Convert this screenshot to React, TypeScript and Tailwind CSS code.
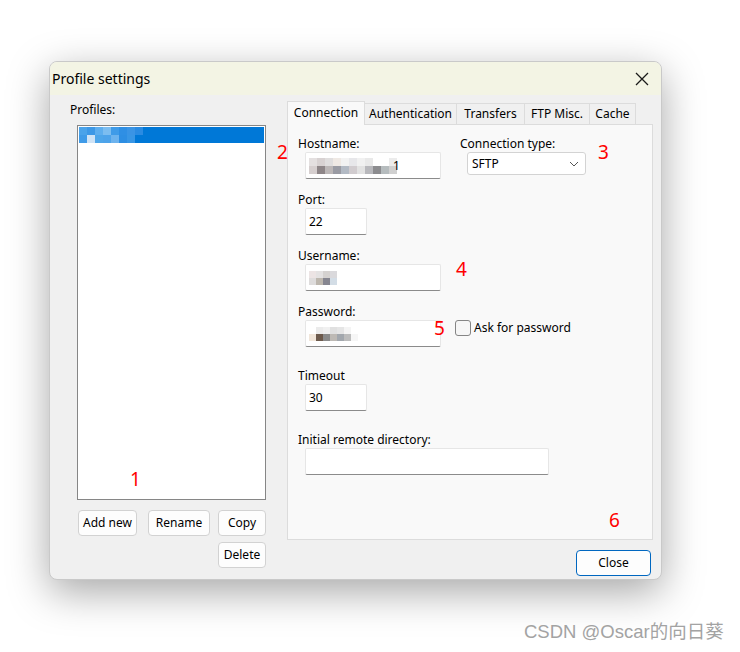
import React from "react";

const font = { fontFamily: '"Noto Sans", "Open Sans", sans-serif' };

function Mosaic({ cells, size = 8 }: { cells: (string | null)[][]; size?: number }) {
  return (
    <div className="flex flex-col">
      {cells.map((row, i) => (
        <div key={i} className="flex">
          {row.map((c, j) => (
            <div key={j} style={{ width: size, height: size, background: c ?? "transparent" }} />
          ))}
        </div>
      ))}
    </div>
  );
}

function TextInput({ w, children }: { w: string; children?: React.ReactNode }) {
  return (
    <div
      className={`${w} h-[27px] bg-white border border-[#e6e6e6] border-b-[#8b8b8b] rounded-[2px] flex items-center px-[3px] text-[12px] text-black`}
    >
      {children}
    </div>
  );
}

function Label({ children }: { children: React.ReactNode }) {
  return <div className="h-[16px] leading-[16px] text-[12px] text-black">{children}</div>;
}

function Btn({ w, children }: { w: string; children: React.ReactNode }) {
  return (
    <div
      className={`${w} h-[26px] bg-[#fdfdfd] border border-[#d2d2d2] rounded-[4px] flex items-center justify-center text-[12px] text-black`}
    >
      {children}
    </div>
  );
}

function Tab({ w, active, children }: { w: string; active?: boolean; children: React.ReactNode }) {
  return active ? (
    <div
      className={`${w} h-[24px] bg-[#f9f9f9] border border-[#dcdcdc] border-b-0 flex items-center justify-center text-[12px] text-black relative z-10 -mb-px pb-[2px]`}
    >
      {children}
    </div>
  ) : (
    <div
      className={`${w} h-[21px] bg-[#f0f0f0] border border-[#dcdcdc] border-b-0 border-l-0 flex items-center justify-center text-[12px] text-black`}
    >
      {children}
    </div>
  );
}

export default function App() {
  const red = "absolute text-[#ff0000] text-[19px] leading-none";
  return (
    <div className="w-[740px] h-[652px] bg-white relative overflow-hidden pt-[61px] pl-[49px]" style={font}>
      <div className="w-[613px] h-[519px] bg-[#f0f0f0] rounded-[8px] border border-[#c9c9c9] shadow-[0_12px_40px_rgba(0,0,0,0.35)] flex flex-col overflow-hidden">
        {/* title bar */}
        <div className="h-[33px] bg-[#f3f4e4] flex items-center justify-between pl-[2px] pr-[12px]">
          <span className="text-[14px] text-black">Profile settings</span>
          <svg width="14" height="14" viewBox="0 0 14 14">
            <path d="M1 1 L13 13 M13 1 L1 13" stroke="#1a1a1a" strokeWidth="1.3" />
          </svg>
        </div>
        {/* body */}
        <div className="flex flex-1">
          {/* left column */}
          <div className="w-[218px] pl-[20px] pt-[7px] flex flex-col">
            <div className="h-[16px] leading-[16px] text-[12px] text-black">Profiles:</div>
            <div className="ml-[7px] mt-[7px] w-[189px] h-[375px] bg-white border border-[#868686] p-px">
              <div className="h-[16px] bg-[#0078d7] flex items-start">
                <Mosaic
                  size={8}
                  cells={[
                    ["#4aa3ea", "#3d98e6", "#5eaeee", "#7cbdf0", "#3f9be8", "#2f8fe4", "#3a94e5", "#2a8be2"],
                    ["#3f9be8", "#cfe3f6", "#4ea6ea", "#4da3ea", "#6db3ee", "#2d8ee3", "#3896e5", "#0078d7"],
                  ]}
                />
              </div>
            </div>
            <div className="flex ml-[8px] mt-[10px]">
              <Btn w="w-[59px]">Add new</Btn>
              <div className="ml-[11px]">
                <Btn w="w-[62px]">Rename</Btn>
              </div>
              <div className="ml-[8px]">
                <Btn w="w-[48px]">Copy</Btn>
              </div>
            </div>
            <div className="flex justify-end mr-[2px] mt-[6px]">
              <Btn w="w-[48px]">Delete</Btn>
            </div>
          </div>
          {/* right column */}
          <div className="flex flex-col ml-[19px] pt-[6px]">
            <div className="flex items-end h-[23px]">
              <Tab w="w-[78px]" active>
                Connection
              </Tab>
              <Tab w="w-[92px]">Authentication</Tab>
              <Tab w="w-[68px]">Transfers</Tab>
              <Tab w="w-[65px]">FTP Misc.</Tab>
              <Tab w="w-[46px]">Cache</Tab>
            </div>
            <div className="w-[366px] h-[416px] bg-[#f9f9f9] border border-[#dcdcdc] pl-[10px] pt-[11px]">
              <div className="flex">
                <div className="w-[161px]">
                  <Label>Hostname:</Label>
                  <div className="ml-[7px]">
                    <TextInput w="w-[136px]">
                      <div className="flex items-center">
                        <Mosaic
                          size={8}
                          cells={[
                            ["#e4e0e0", "#d8d2d2", "#e0dede", "#efe9e4", "#f2f2f2", "#e7e7ea", "#f1f1f1", "#e9e9e9", "#ffffff", "#ffffff", "#ececec"],
                            ["#d6cfcf", "#8e8688", "#bcb7b7", "#9a9ba3", "#b3bac4", "#d1cccf", "#e2e2e2", "#b8b8bc", "#8c8c8f", "#b6bcbe", "#d0d0d0"],
                          ]}
                        />
                        <span className="text-[12px] -ml-[4px]">1</span>
                      </div>
                    </TextInput>
                  </div>
                </div>
                <div className="ml-[1px]">
                  <Label>Connection type:</Label>
                  <div className="ml-[7px] w-[119px] h-[23px] bg-white border border-[#d3d3d3] rounded-[3px] flex items-center justify-between pl-[4px] pr-[6px] text-[12px]">
                    <span>SFTP</span>
                    <svg width="10" height="6" viewBox="0 0 10 6">
                      <path d="M1 1 L5 5 L9 1" stroke="#555" strokeWidth="1" fill="none" />
                    </svg>
                  </div>
                </div>
              </div>

              <div className="mt-[13px]">
                <Label>Port:</Label>
                <div className="ml-[7px]">
                  <TextInput w="w-[62px]">22</TextInput>
                </div>
              </div>

              <div className="mt-[13px]">
                <Label>Username:</Label>
                <div className="ml-[7px]">
                  <TextInput w="w-[136px]">
                    <Mosaic
                      size={7}
                      cells={[
                        ["#ece4e4", "#e4e2e2", "#d5d2d0", "#dad9dc"],
                        ["#dedcdc", "#bdb7ae", "#868690", "#d3dde6"],
                      ]}
                    />
                  </TextInput>
                </div>
              </div>

              <div className="mt-[13px] flex">
                <div>
                  <Label>Password:</Label>
                  <div className="ml-[7px]">
                    <TextInput w="w-[136px]">
                      <Mosaic
                        size={7}
                        cells={[
                          ["#ffffff", "#ebebeb", "#f0f0f0", "#e0e0e0", "#e5e5e5", "#f4f4f4", "#ffffff"],
                          ["#f1e6da", "#6d5a4c", "#8a8a8a", "#bdb9b4", "#a2a7ad", "#bcbcbc", "#f6f6f6"],
                        ]}
                      />
                    </TextInput>
                  </div>
                </div>
                <div className="ml-[14px] mt-[16px] flex items-start">
                  <div className="w-[16px] h-[16px] rounded-[3px] border border-[#858585] bg-[#f6f6f6]" />
                  <span className="ml-[3px] text-[12px] leading-[16px]">Ask for password</span>
                </div>
              </div>

              <div className="mt-[21px]">
                <Label>Timeout</Label>
                <div className="ml-[7px]">
                  <TextInput w="w-[62px]">30</TextInput>
                </div>
              </div>

              <div className="mt-[21px]">
                <Label>Initial remote directory:</Label>
                <div className="ml-[7px]">
                  <TextInput w="w-[244px]" />
                </div>
              </div>
            </div>
            <div className="flex justify-end mt-[10px] mr-[2px]">
              <div className="w-[75px] h-[26px] bg-[#fdfdfd] border border-[#0067c0] rounded-[4px] flex items-center justify-center text-[12px] text-black">
                Close
              </div>
            </div>
          </div>
        </div>
      </div>

      {/* annotation numbers */}
      <span className={red} style={{ left: 130, top: 470 }}>1</span>
      <span className={red} style={{ left: 277, top: 143 }}>2</span>
      <span className={red} style={{ left: 598, top: 143 }}>3</span>
      <span className={red} style={{ left: 456, top: 260 }}>4</span>
      <span className={red} style={{ left: 434, top: 319 }}>5</span>
      <span className={red} style={{ left: 609, top: 511 }}>6</span>

      {/* watermark */}
      <span
        className="absolute text-[18.5px] text-[#a3a3a3] leading-none"
        style={{ left: 524, top: 623, fontFamily: '"Liberation Sans", "Noto Sans CJK SC", sans-serif' }}
      >
        CSDN @Oscar的向日葵
      </span>
    </div>
  );
}
